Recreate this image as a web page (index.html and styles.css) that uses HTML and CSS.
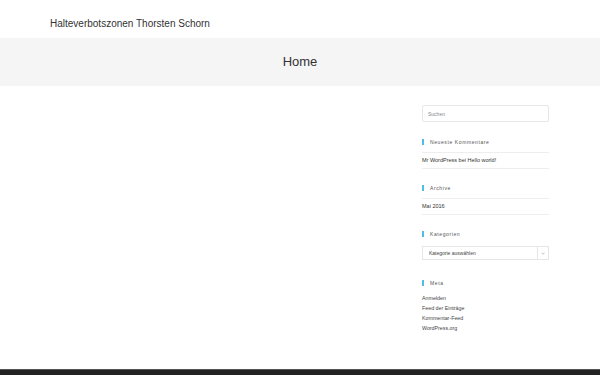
FILE: index.html
```html
<!DOCTYPE html>
<html lang="de">
<head>
    <meta charset="UTF-8">
    <meta name="viewport" content="width=device-width, initial-scale=1.0">
    <title>Home – Halteverbotszonen Thorsten Schorn</title>
    <link rel="stylesheet" href="styles.css">
</head>
<body>
    <header class="site-header">
        <div class="wrap">
            <a class="site-title" href="#">Halteverbotszonen Thorsten Schorn</a>
        </div>
    </header>

    <section class="page-header">
        <h1>Home</h1>
    </section>

    <main class="site-main">
        <div class="wrap layout">
            <div class="content"></div>

            <aside class="sidebar">
                <div class="widget search-widget">
                    <input type="search" class="search-field" placeholder="Suchen">
                </div>

                <div class="widget">
                    <h4 class="widget-title">Neueste Kommentare</h4>
                    <ul class="lined">
                        <li>Mr WordPress bei Hello world!</li>
                    </ul>
                </div>

                <div class="widget">
                    <h4 class="widget-title">Archive</h4>
                    <ul class="lined">
                        <li>Mai 2016</li>
                    </ul>
                </div>

                <div class="widget cat-widget">
                    <h4 class="widget-title cat-title">Kategorien</h4>
                    <div class="select">
                        <span>Kategorie auswählen</span>
                        <span class="select-arrow">
                            <svg width="4" height="3" viewBox="0 0 4 3"><path d="M0.5 0.8 L2 2.2 L3.5 0.8" fill="none" stroke="#999" stroke-width="0.6"/></svg>
                        </span>
                    </div>
                </div>

                <div class="widget">
                    <h4 class="widget-title">Meta</h4>
                    <ul class="plain">
                        <li>Anmelden</li>
                        <li>Feed der Einträge</li>
                        <li>Kommentar-Feed</li>
                        <li>WordPress.org</li>
                    </ul>
                </div>
            </aside>
        </div>
    </main>

    <footer class="site-footer"></footer>
</body>
</html>
```

FILE: styles.css
```css
body { margin: 0; font-family: "Liberation Sans", Arial, sans-serif; color: #333; background: #fff; }
.wrap { width: 499px; margin: 0 0 0 50px; }
ul { list-style: none; margin: 0; padding: 0; }

.site-header { height: 38px; display: flex; align-items: center; }
.site-title { color: #333; text-decoration: none; font-size: 10px; line-height: 12px; position: relative; top: 3px; }

.page-header { height: 48px; background: #f5f5f5; display: flex; align-items: center; justify-content: center; }
.page-header h1 { margin: 0; font-size: 13px; font-weight: normal; color: #333; line-height: 16px; }

.site-main { padding: 19px 0 36px; }
.layout { display: grid; grid-template-columns: 1fr 127px; }

.widget { margin-bottom: 16px; }
.widget:last-child { margin-bottom: 0; }
.search-widget { margin-bottom: 17px; }
.cat-widget { margin-bottom: 20px; }
.search-field { display: block; box-sizing: border-box; width: 100%; height: 17px; border: 1px solid #e6e6e6; border-radius: 2px; padding: 0 5px; font-family: inherit; font-size: 5px; color: #999; outline: none; }
.search-field::placeholder { color: #888; }

.widget-title { margin: 0 0 7px; font-size: 5px; line-height: 6px; font-weight: normal; letter-spacing: 0.6px; padding-left: 6px; border-left: 2px solid #4fbde8; color: #555; }
.cat-title { margin-bottom: 9px; }

.lined li { font-size: 5.5px; line-height: 7px; padding: 4px 0; border-bottom: 1px solid #eee; color: #333; }
.lined li:first-child { border-top: 1px solid #eee; }

.select { height: 14px; box-sizing: border-box; border: 1px solid #e6e6e6; display: flex; align-items: center; font-size: 5px; color: #444; padding-left: 6px; }
.select span:first-child { flex: 1; }
.select-arrow { width: 10px; height: 100%; border-left: 1px solid #e6e6e6; display: flex; align-items: center; justify-content: center; }

.plain li { font-size: 5.3px; line-height: 10px; color: #444; }

.site-footer { height: 40px; background: #222; border-top: 1px solid #555; }
```
